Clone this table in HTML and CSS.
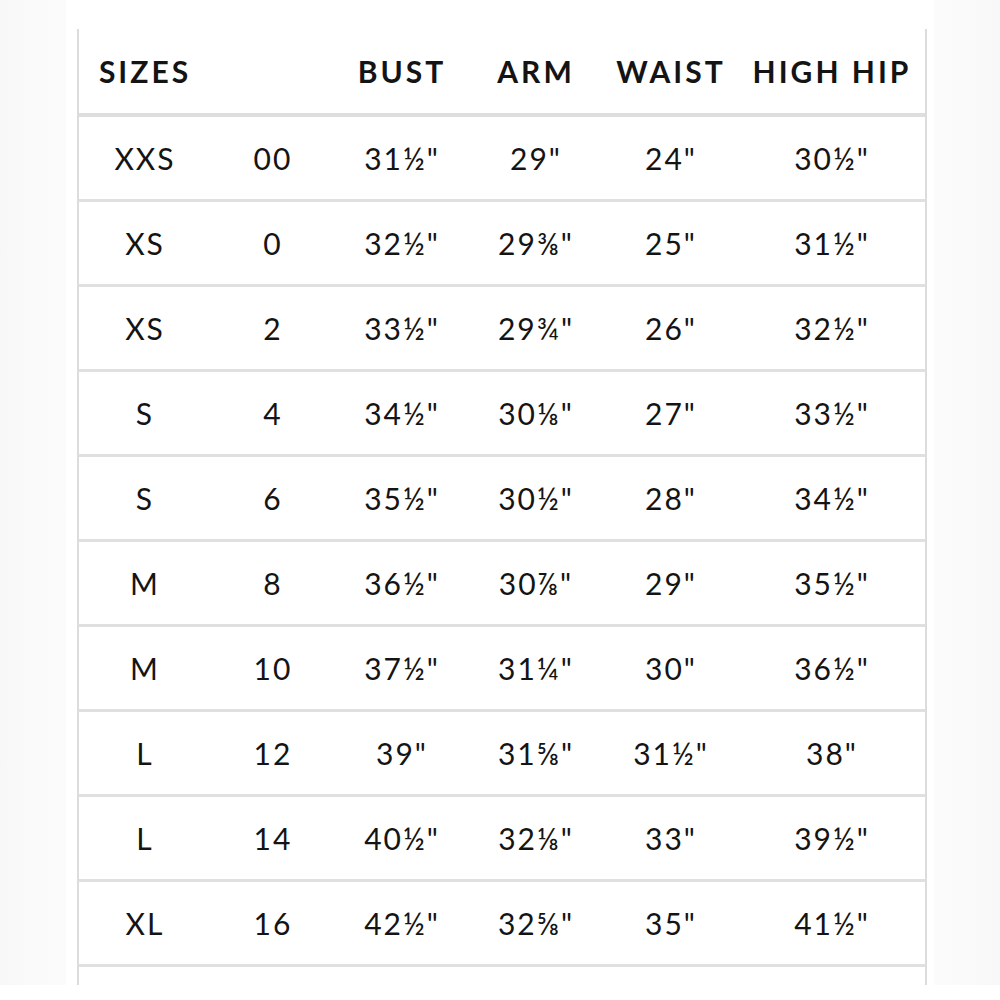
FILE: index.html
```html
<!DOCTYPE html>
<html>
<head>
<meta charset="utf-8">
<link rel="stylesheet" href="styles.css">
</head>
<body>
<div class="page">
  <div class="edge edge-left"></div>
  <div class="sheet">
    <div class="row head">
      <div class="cell">SIZES</div><div class="cell"></div><div class="cell">BUST</div><div class="cell">ARM</div><div class="cell">WAIST</div><div class="cell">HIGH HIP</div>
    </div>
    <div class="row"><div class="cell">XXS</div><div class="cell">00</div><div class="cell">31½"</div><div class="cell">29"</div><div class="cell">24"</div><div class="cell">30½"</div></div>
    <div class="row"><div class="cell">XS</div><div class="cell">0</div><div class="cell">32½"</div><div class="cell">29⅜"</div><div class="cell">25"</div><div class="cell">31½"</div></div>
    <div class="row"><div class="cell">XS</div><div class="cell">2</div><div class="cell">33½"</div><div class="cell">29¾"</div><div class="cell">26"</div><div class="cell">32½"</div></div>
    <div class="row"><div class="cell">S</div><div class="cell">4</div><div class="cell">34½"</div><div class="cell">30⅛"</div><div class="cell">27"</div><div class="cell">33½"</div></div>
    <div class="row"><div class="cell">S</div><div class="cell">6</div><div class="cell">35½"</div><div class="cell">30½"</div><div class="cell">28"</div><div class="cell">34½"</div></div>
    <div class="row"><div class="cell">M</div><div class="cell">8</div><div class="cell">36½"</div><div class="cell">30⅞"</div><div class="cell">29"</div><div class="cell">35½"</div></div>
    <div class="row"><div class="cell">M</div><div class="cell">10</div><div class="cell">37½"</div><div class="cell">31¼"</div><div class="cell">30"</div><div class="cell">36½"</div></div>
    <div class="row"><div class="cell">L</div><div class="cell">12</div><div class="cell">39"</div><div class="cell">31⅝"</div><div class="cell">31½"</div><div class="cell">38"</div></div>
    <div class="row"><div class="cell">L</div><div class="cell">14</div><div class="cell">40½"</div><div class="cell">32⅛"</div><div class="cell">33"</div><div class="cell">39½"</div></div>
    <div class="row"><div class="cell">XL</div><div class="cell">16</div><div class="cell">42½"</div><div class="cell">32⅝"</div><div class="cell">35"</div><div class="cell">41½"</div></div>
  </div>
  <div class="edge edge-right"></div>
</div>
</body>
</html>
```
FILE: styles.css
```css
html, body {
  margin: 0;
  padding: 0;
  background: #ffffff;
}
body {
  font-family: Lato, "Open Sans", "DejaVu Sans", sans-serif;
  color: #141414;
}
.page {
  display: flex;
  align-items: flex-start;
  width: 1000px;
  height: 1000px;
  overflow: hidden;
}
.edge {
  width: 66px;
  height: 985px;
  background: linear-gradient(to right, #f8f8f8, #fbfbfb);
}
.edge-left {
  margin-right: 11px;
}
.edge-right {
  margin-left: 7px;
  background: linear-gradient(to left, #f8f8f8, #fbfbfb);
}
.sheet {
  margin-top: 29px;
  height: 956px;
  width: 846px;
  border-left: 2px solid #dcdcdc;
  border-right: 2px solid #dcdcdc;
  background: #fff;
  overflow: hidden;
}
.row {
  display: grid;
  grid-template-columns: 132px 124px 134px 134px 136px 186px;
  height: 82px;
  border-bottom: 3px solid #e0e0e0;
  align-items: center;
}
.row.head {
  height: 84px;
  border-bottom: 4px solid #dedede;
}
.cell {
  text-align: center;
  font-size: 30px;
  letter-spacing: 2px;
  font-weight: 400;
  white-space: nowrap;
}
.head .cell {
  font-weight: 700;
  font-size: 30px;
  letter-spacing: 3px;
}
```
